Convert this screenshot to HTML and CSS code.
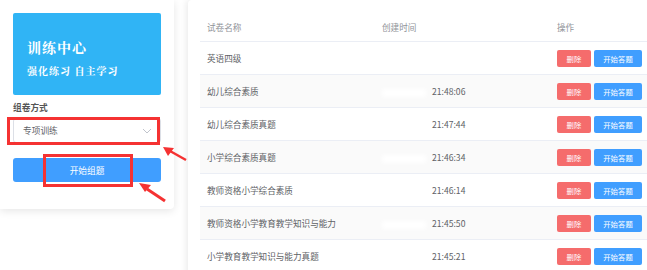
FILE: index.html
```html
<!DOCTYPE html>
<html lang="zh">
<head>
  <meta charset="UTF-8">
  <title>训练中心</title>
  <link rel="stylesheet" href="styles.css">
</head>
<body>
  <div class="page">
    <div class="side">
      <div class="banner">
        <div class="banner-title">训练中心</div>
        <div class="banner-sub">强化练习 自主学习</div>
      </div>
      <div class="label">组卷方式</div>
      <div class="select">
        <span>专项训练</span>
        <svg class="chevron" width="10" height="6" viewBox="0 0 10 6"><path d="M1 1 L5 5 L9 1" fill="none" stroke="#c0c4cc" stroke-width="1"/></svg>
      </div>
      <button class="btn-make">开始组题</button>
    </div>

    <div class="main">
      <table class="list">
        <thead>
          <tr><th class="c-name">试卷名称</th><th class="c-time">创建时间</th><th class="c-op">操作</th></tr>
        </thead>
        <tbody>
          <tr><td>英语四级</td><td class="c-time"></td><td class="c-op"><span class="b-del">删除</span><span class="b-go">开始答题</span></td></tr>
          <tr><td>幼儿综合素质</td><td class="c-time"><span class="mask"></span>21:48:06</td><td class="c-op"><span class="b-del">删除</span><span class="b-go">开始答题</span></td></tr>
          <tr><td>幼儿综合素质真题</td><td class="c-time"><span class="mask"></span>21:47:44</td><td class="c-op"><span class="b-del">删除</span><span class="b-go">开始答题</span></td></tr>
          <tr><td>小学综合素质真题</td><td class="c-time"><span class="mask"></span>21:46:34</td><td class="c-op"><span class="b-del">删除</span><span class="b-go">开始答题</span></td></tr>
          <tr><td>教师资格小学综合素质</td><td class="c-time"><span class="mask"></span>21:46:14</td><td class="c-op"><span class="b-del">删除</span><span class="b-go">开始答题</span></td></tr>
          <tr><td>教师资格小学教育教学知识与能力</td><td class="c-time"><span class="mask"></span>21:45:50</td><td class="c-op"><span class="b-del">删除</span><span class="b-go">开始答题</span></td></tr>
          <tr><td>小学教育教学知识与能力真题</td><td class="c-time"><span class="mask"></span>21:45:21</td><td class="c-op"><span class="b-del">删除</span><span class="b-go">开始答题</span></td></tr>
        </tbody>
      </table>
    </div>
  </div>

  <!-- annotations -->
  <div class="mark mark-select"></div>
  <div class="mark mark-btn"></div>
  <svg class="arrows" width="200" height="220" viewBox="0 0 200 220">
    <line x1="186" y1="160" x2="170" y2="151" stroke="#f53232" stroke-width="2.5"/>
    <path d="M163 147 L174 148 L168 156 Z" fill="#f53232"/>
    <line x1="165" y1="201" x2="147" y2="189" stroke="#f53232" stroke-width="3"/>
    <path d="M139 183 L151 185 L145 192 Z" fill="#f53232"/>
  </svg>
</body>
</html>
```

FILE: styles.css
```css
body {
  margin: 0;
  background: #fff;
  font-family: "Noto Sans CJK SC", "Noto Sans", sans-serif;
  color: #606266;
}

.page {
  display: flex;
  align-items: flex-start;
  gap: 14px;
  height: 270px;
  overflow: hidden;
}

.side {
  width: 148px;
  padding: 13px 13px 27px;
  background: #fff;
  border-radius: 0 0 4px 0;
  box-shadow: 0 2px 8px rgba(0, 0, 0, 0.1);
}

.banner {
  height: 82px;
  background: #30b4f5;
  border-radius: 2px;
  color: #fff;
  padding: 26px 0 0 14px;
  box-sizing: border-box;
  font-family: "Noto Serif CJK SC", "Noto Sans CJK SC", serif;
  font-weight: bold;
}

.banner-title {
  font-size: 14px;
  letter-spacing: 1px;
  line-height: 16px;
}

.banner-sub {
  font-size: 10px;
  letter-spacing: 1px;
  margin-top: 8px;
}

.label {
  font-size: 8.7px;
  font-weight: bold;
  color: #555;
  margin-top: 6px;
  line-height: 14px;
}

.select {
  margin-top: 3px;
  height: 23px;
  border: 1px solid #dcdfe6;
  border-radius: 3px;
  display: flex;
  align-items: center;
  justify-content: space-between;
  padding: 0 8px 0 9px;
  font-size: 8.7px;
  color: #606266;
}

.btn-make {
  display: block;
  width: 148px;
  height: 24px;
  margin-top: 15px;
  border: none;
  border-radius: 3px;
  background: #409eff;
  color: #fff;
  font-family: inherit;
  font-size: 8.7px;
}

.main {
  flex: 1;
  height: 270px;
  padding: 20px 0 0 12px;
  border-radius: 4px 0 0 0;
  box-shadow: -2px 0 6px rgba(0, 0, 0, 0.08);
}

.list {
  width: 447px;
  border-collapse: collapse;
  font-size: 8.6px;
}

.list th {
  text-align: left;
  font-weight: normal;
  color: #909399;
  line-height: 14px;
  padding: 0 0 7px 7px;
  border-bottom: 1px solid #ebeef5;
}

.list td {
  height: 32px;
  padding: 0 0 0 7px;
  border-bottom: 1px solid #ebeef5;
  color: #606266;
}

.list tbody tr:nth-child(even) td {
  background: #fafafa;
}

.c-name { width: 168px; }
.c-time { width: 168px; }
.list td.c-time { font-size: 8.6px; }

.mask {
  display: inline-block;
  width: 44px;
  height: 8px;
  margin-right: 6px;
  background: #fff;
  filter: blur(2px);
  vertical-align: middle;
}

.c-op { white-space: nowrap; }

.b-del, .b-go {
  display: inline-block;
  height: 17px;
  line-height: 17px;
  border-radius: 2px;
  color: #fff;
  font-size: 7.4px;
  text-align: center;
  vertical-align: middle;
}

.b-del {
  width: 34px;
  background: #f56c6c;
}

.b-go {
  width: 48px;
  margin-left: 3px;
  background: #409eff;
}

.mark {
  position: absolute;
  border: 3px solid #f53232;
}

.mark-select {
  left: 7px;
  top: 117px;
  width: 147px;
  height: 22px;
}

.mark-btn {
  left: 43px;
  top: 154px;
  width: 84px;
  height: 27px;
}

.arrows {
  position: absolute;
  left: 0;
  top: 0;
}
```
